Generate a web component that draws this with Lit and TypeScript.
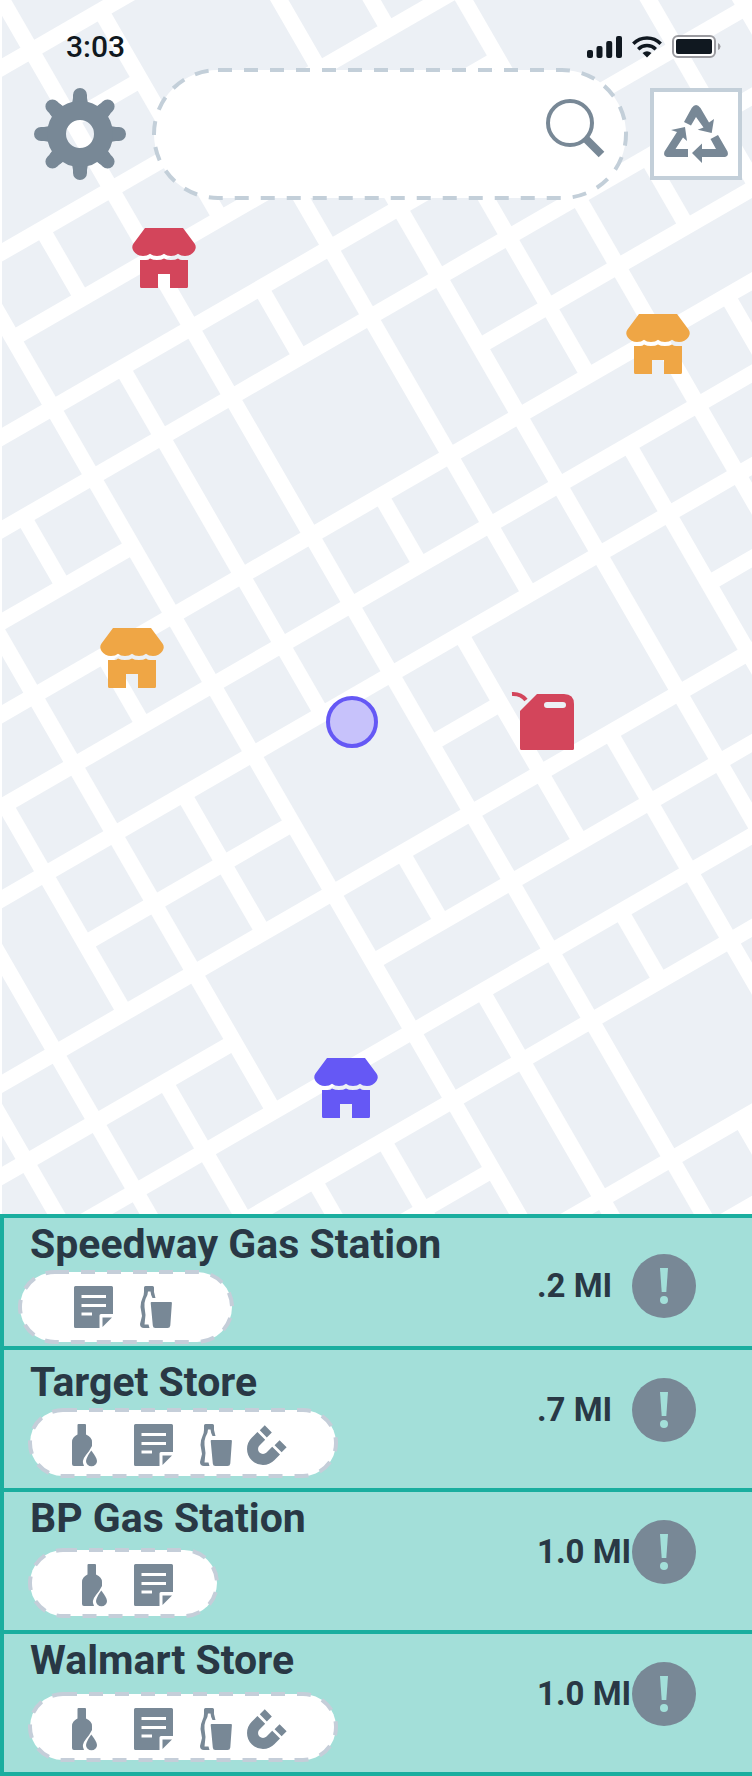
import { LitElement, html, css, svg } from "lit";
import { customElement } from "lit/decorators.js";

type Kind = "bottle" | "note" | "cup" | "magnet";

/* Street grid: city blocks on an 80px lattice, [column, row, columns, rows]. */
const PITCH = 80;
const STREET = 16;
const MERGED: number[][] = [
  [0, -4, 2, 2], [3, -4, 2, 2], [2, -5, 2, 1], [5, -4, 1, 2], [5, -2, 2, 1],
  [7, -2, 2, 2], [7, 0, 2, 1], [7, 2, 2, 1], [0, -1, 2, 1], [2, -1, 2, 1],
  [-1, -2, 1, 2], [-2, 0, 2, 1], [0, 1, 1, 2], [1, 1, 1, 2], [2, 1, 2, 2],
  [4, 1, 1, 2], [-2, 2, 2, 1], [-4, 3, 2, 1], [-2, 4, 2, 1], [2, 4, 2, 1],
  [5, 3, 2, 1], [0, 5, 2, 2], [3, 5, 2, 2], [5, 5, 1, 2], [-4, 5, 1, 2],
  [-5, 5, 1, 2], [-4, 7, 2, 1], [-2, 7, 2, 2], [0, 8, 2, 1], [2, 8, 2, 1],
  [-3, 9, 3, 1], [0, 10, 1, 2], [1, 10, 1, 2], [2, 10, 2, 2],
];

function cityBlocks(): number[][] {
  const taken = new Set<string>();
  for (const [c, r, w, h] of MERGED)
    for (let i = c; i < c + w; i++) for (let j = r; j < r + h; j++) taken.add(`${i},${j}`);
  const blocks = [...MERGED];
  for (let i = -8; i < 14; i++)
    for (let j = -9; j < 18; j++) if (!taken.has(`${i},${j}`)) blocks.push([i, j, 1, 1]);
  return blocks;
}

const storeIcon = svg`
  <path d="M13 0H51L62.500 15.500Q65 19 62.500 23Q59 28 53 28Q48.500 28 46 25.700Q43.500 28 39 28Q34.500 28 32 25.700Q29.500 28 25 28Q20.500 28 18 25.700Q15.500 28 11 28Q5 28 1.500 23Q-1 19 1.500 15.500Z"/>
  <path d="M8 32H14Q16.500 32 18 30.500Q21 32 25 32Q29.500 32 32 30.500Q34.500 32 39 32Q43.500 32 46 30.500Q48 32 50 32H56V58.500Q56 60 54.500 60H38V46H26V60H9.500Q8 60 8 58.500Z"/>`;

const fuelIcon = svg`
  <path fill-rule="evenodd" d="M25 2H52Q62 2 62 12V56.500Q62 58 60.500 58H9.500Q8 58 8 56.500V19ZM35 10a3 3 0 0 0 0 6H51a3 3 0 0 0 0-6Z"/>
  <path d="M0 2Q9 1.500 14 8" fill="none" stroke="currentColor" stroke-width="4"/>`;

const hereIcon = svg`<circle cx="26" cy="26" r="24" fill="#c7c2fb" stroke="currentColor" stroke-width="4"/>`;

const PINS = [
  { label: "Store", tone: "red", x: 132, y: 228, w: 64, h: 60, art: storeIcon },
  { label: "Store", tone: "orange", x: 626, y: 314, w: 64, h: 60, art: storeIcon },
  { label: "Store", tone: "orange", x: 100, y: 628, w: 64, h: 60, art: storeIcon },
  { label: "Your location", tone: "violet", x: 326, y: 696, w: 52, h: 52, art: hereIcon },
  { label: "Gas station", tone: "red", x: 512, y: 692, w: 62, h: 58, art: fuelIcon },
  { label: "Store", tone: "violet", x: 314, y: 1058, w: 64, h: 60, art: storeIcon },
];

const MATERIALS: Record<Kind, { label: string; w: number; h: number; art: unknown }> = {
  bottle: {
    label: "Bottles", w: 25, h: 42,
    art: svg`<path d="M6.500 0H13Q14 0 14 1V10.500Q20 13 20 18V22Q17.500 27 14 31Q9 37 12 42H2Q0 42 0 40V18Q0 13 5.500 10.500V1Q5.500 0 6.500 0Z"/>
      <path d="M19.300 26.500Q25 34 25 37A5.500 5.200 0 0 1 14 37Q14.500 33 19.300 26.500Z"/>`,
  },
  note: {
    label: "Paper", w: 39, h: 42,
    art: svg`<path fill-rule="evenodd" d="M1.500 0H37.500Q39 0 39 1.500V28H27Q25.500 28 25.500 29.500V42H1.500Q0 42 0 40.500V1.500Q0 0 1.500 0ZM7.500 9V12H32V9ZM7.500 18V21H32V18ZM7.500 26.500V29.500H18V26.500Z"/>
      <path d="M28.500 31.500H38L28.500 41Z"/>`,
  },
  cup: {
    label: "Plastic", w: 32, h: 42,
    art: svg`<path d="M5.500 0H12.500Q14 0 14 1.500V6L15.500 12H12.500Q11 10 10.500 5.500H8Q8 9 5.500 13Q4 17 4.500 21L5.500 29L4.500 38.500H8.500L9.500 42H4Q0 42 0 38L2 30L.5 21Q.5 16 2.500 12Q4 9 4 6V1.500Q4 0 5.500 0Z"/>
      <path d="M11.500 16H31Q32 16 31.900 17L30.300 39.500Q30 42 27.500 42H15.300Q13 42 12.800 39.500L10.700 17Q10.600 16 11.500 16Z"/>`,
  },
  magnet: {
    label: "Metal", w: 40, h: 40,
    art: svg`<g fill="none" stroke="currentColor" stroke-width="11">
      <path d="M14.300 10.900L8.600 16.600A10.400 10.400 0 0 0 23.400 31.400L29.100 25.700"/>
      <path d="M16.300 8.900L21.300 3.900M31.100 23.700L36.100 18.700" stroke-width="10"/></g>`,
  },
};

const PLACES: { name: string; distance: string; layout: string; accepts: Kind[] }[] = [
  { name: "Speedway Gas Station", distance: ".2 MI", layout: "first", accepts: ["note", "cup"] },
  { name: "Target Store", distance: ".7 MI", layout: "full low", accepts: ["bottle", "note", "cup", "magnet"] },
  { name: "BP Gas Station", distance: "1.0 MI", layout: "pair", accepts: ["bottle", "note"] },
  { name: "Walmart Store", distance: "1.0 MI", layout: "full", accepts: ["bottle", "note", "cup", "magnet"] },
];

@customElement("city-map")
export class CityMap extends LitElement {
  static styles = css`
    :host { display: block; background: #fff; padding-left: 2px; overflow: hidden; }
    svg { display: block; width: 100%; height: 100%; fill: #ecf0f5; }
  `;
  render() {
    return html`<svg aria-hidden="true">
      <g transform="translate(61.700 410.700) rotate(-30)">
        ${cityBlocks().map(([c, r, w, h]) => svg`<rect x=${c * PITCH} y=${r * PITCH}
          width=${w * PITCH - STREET} height=${h * PITCH - STREET}></rect>`)}
      </g>
    </svg>`;
  }
}

@customElement("place-row")
export class PlaceRow extends LitElement {
  static properties = { place: { attribute: false } };
  declare place: (typeof PLACES)[number];

  static styles = css`
    :host { display: block; background: #a3dfd9; border-bottom: 4px solid #1aae9f; color: #293845; }
    .row { display: flex; align-items: flex-start; min-height: 138px; box-sizing: border-box; padding: 4px 56px 0 24px; }
    .row.first { min-height: 128px; }
    .row.low { padding-top: 10px; }
    .info { flex: 1; min-width: 0; display: flex; flex-direction: column; align-items: flex-start; gap: 8px; }
    .full .info { gap: 10px; }
    .first .info, .low .info { gap: 4px; }
    h2 { margin: 0; padding-left: 2px; font-size: 41px; line-height: 44px; font-weight: 700; }
    .pill { position: relative; display: flex; align-items: center; gap: 27px; box-sizing: border-box; height: 70px;
      margin: 0; padding: 4px 46px 0 54px; list-style: none; color: #788896; }
    .first .pill { height: 74px; padding: 0 62px 0 56px; margin-left: -10px; }
    .full .pill { padding: 4px 51px 0 44px; }
    .pill li { display: flex; position: relative; }
    .full .bottle { margin-right: 10px; }
    .full .magnet { margin-left: -12px; }
    .outline { position: absolute; inset: 0; width: 100%; height: 100%; }
    .outline rect { x: 2px; y: 2px; width: calc(100% - 4px); height: calc(100% - 4px); fill: #fff;
      stroke: #c5ced9; stroke-width: 4; stroke-dasharray: 14 12; }
    .side { display: flex; align-items: center; padding-top: 24px; }
    .first .side { padding-top: 32px; }
    .low .side { padding-top: 18px; }
    .distance { width: 95px; font-size: 33px; line-height: 40px; font-weight: 700; white-space: nowrap; }
    .alert { display: block; width: 64px; height: 64px; padding: 0; border: 0; background: none; color: #788896; cursor: pointer; }
    .alert svg { display: block; }
    .art { fill: currentColor; display: block; overflow: visible; }
  `;
  render() {
    const p = this.place;
    return html`<article class="row ${p.layout}">
      <div class="info">
        <h2>${p.name}</h2>
        <ul class="pill">
          <svg class="outline" aria-hidden="true"><rect rx=${p.layout === "first" ? 35 : 33}></rect></svg>
          ${p.accepts.map((k) => {
            const m = MATERIALS[k];
            return html`<li class=${k}><svg class="art" role="img" aria-label=${m.label} width=${m.w} height=${m.h}
              viewBox="0 0 ${m.w} ${m.h}">${m.art}</svg></li>`;
          })}
        </ul>
      </div>
      <div class="side">
        <span class="distance">${p.distance}</span>
        <button class="alert" aria-label="Details for ${p.name}">
          <svg width="64" height="64" viewBox="0 0 64 64">
            <circle cx="32" cy="32" r="32" fill="currentColor"/>
            <path d="M28 14H36L34.300 38H29.700Z" fill="#a3dfd9"/>
            <circle cx="32" cy="46" r="4" fill="#a3dfd9"/>
          </svg>
        </button>
      </div>
    </article>`;
  }
}

@customElement("app-root")
export class AppRoot extends LitElement {
  static styles = css`
    :host { display: flex; flex-direction: column; min-height: 100vh; font-family: Roboto, "Liberation Sans", sans-serif; }
    button { display: block; padding: 0; border: 0; background: none; cursor: pointer; color: inherit; }
    svg { display: block; }
    .stage { position: relative; flex: 1; min-height: 900px; overflow: hidden; }
    .ground { position: absolute; inset: 0; }
    .pin { position: absolute; fill: currentColor; }
    .pin svg { overflow: visible; }
    .red { color: #d3455b; }
    .orange { color: #efa645; }
    .violet { color: #6558f5; }
    header { position: relative; }
    .status { display: flex; justify-content: space-between; align-items: center; box-sizing: border-box; height: 68px;
      padding: 26px 31px 0 66px; color: #101820; font-size: 30px; line-height: 40px; font-weight: 500; }
    .signals { display: flex; align-items: center; gap: 10px; }
    .tools { display: flex; align-items: center; padding: 0 10px 0 34px; }
    .gear { color: #788896; margin-right: 26px; }
    .search { position: relative; flex: 1; min-width: 0; height: 132px; margin-right: 22px; box-sizing: border-box;
      display: flex; align-items: center; padding: 0 22px 10px 60px; }
    .outline { position: absolute; inset: 0; width: 100%; height: 100%; }
    .outline rect { x: 2px; y: 2px; width: calc(100% - 4px); height: calc(100% - 4px); fill: #fff;
      stroke: #c3cfd9; stroke-width: 4; stroke-dasharray: 14 12; }
    .search input { position: relative; flex: 1; min-width: 0; border: 0; outline: 0; background: none; font: inherit;
      font-size: 32px; line-height: 40px; color: #293845; }
    .search button { position: relative; color: #788896; }
    .recycle { box-sizing: border-box; width: 92px; height: 92px; border: 4px solid #c3cfd9; background: #fff;
      color: #788896; display: flex; align-items: center; justify-content: center; }
    .places { display: flex; flex-direction: column; border-top: 4px solid #1aae9f; border-left: 4px solid #1aae9f; }
  `;
  render() {
    return html`
      <main class="stage">
        <city-map class="ground"></city-map>
        <header>
          <div class="status">
            <span>3:03</span>
            <div class="signals" aria-hidden="true">
              <svg width="35" height="22" viewBox="0 0 35 22" fill="currentColor">
                <rect y="14" width="6" height="8" rx="2"/><rect x="9.500" y="10" width="6" height="12" rx="2"/>
                <rect x="19.200" y="5" width="6" height="17" rx="2"/><rect x="29" width="6" height="22" rx="2"/>
              </svg>
              <svg width="30" height="22" viewBox="0 0 30 22" fill="none" stroke="currentColor" stroke-width="3.400">
                <path d="M1.300 7.800Q7 2 15 2T28.700 7.800M6.200 13.200Q10 9.500 15 9.500T23.800 13.200"/>
                <path d="M10.500 17Q15 13.500 19.500 17L15 21.500Z" fill="currentColor" stroke="none"/>
              </svg>
              <svg width="49" height="24" viewBox="0 0 49 24">
                <rect x="1" y="1" width="42" height="21" rx="5" fill="#fff" stroke="#9b9ba0" stroke-width="2"/>
                <rect x="4" y="4" width="36" height="15" rx="2" fill="currentColor"/>
                <path d="M46 8Q48.500 9 48.500 11.500T46 15Z" fill="#9b9ba0"/>
              </svg>
            </div>
          </div>
          <div class="tools">
            <button class="gear" aria-label="Settings">
              <svg width="92" height="92" viewBox="-46 -46 92 92">
                ${[0, 45, 90, 135].map((a) => svg`<path transform="rotate(${a})" fill="none" stroke="currentColor"
                  stroke-width="14" stroke-linecap="round" d="M0-39V-28M0 39V28"></path>
                  <path transform="rotate(${a})" fill="currentColor" d="M-7-36L-8-30H8L7-36ZM-7 36L-8 30H8L7 36Z"></path>`)}
                <circle r="23.500" fill="none" stroke="currentColor" stroke-width="19"/>
              </svg>
            </button>
            <form class="search" role="search">
              <svg class="outline" aria-hidden="true"><rect rx="64"></rect></svg>
              <input type="search" aria-label="Search places" />
              <button type="button" aria-label="Search">
                <svg width="60" height="60" viewBox="0 0 60 60" fill="none" stroke="currentColor">
                  <circle cx="24" cy="24" r="22" stroke-width="4"/>
                  <path d="M39.500 39.500L55.500 55.500" stroke-width="8"/>
                </svg>
              </button>
            </form>
            <button class="recycle" aria-label="Recycling">
              <svg width="64" height="58" viewBox="0 0 64 58" fill="currentColor">
                <path d="M20 17L27.700 3Q32-3 36.500 3L45 17.500L50 14L47.700 28L33.700 24.700L39.500 22.500L32 12L27 20.500Z"/>
                <path d="M46.500 34L54 30L63.500 46.500Q65 51 61 52H38V58L28 48L38 38.500V44H52Z"/>
                <path d="M24 44V52H3Q-1 51 .5 46.500L13 27L7 25L21 22L23 36L19 32.500L11.500 44Z"/>
              </svg>
            </button>
          </div>
        </header>
        ${PINS.map((p) => html`<button class="pin ${p.tone}" aria-label=${p.label} style="left:${p.x}px;top:${p.y}px">
          <svg width=${p.w} height=${p.h} viewBox="0 0 ${p.w} ${p.h}">${p.art}</svg></button>`)}
      </main>
      <section class="places" aria-label="Nearby drop-off places">
        ${PLACES.map((p) => html`<place-row .place=${p}></place-row>`)}
      </section>`;
  }
}
